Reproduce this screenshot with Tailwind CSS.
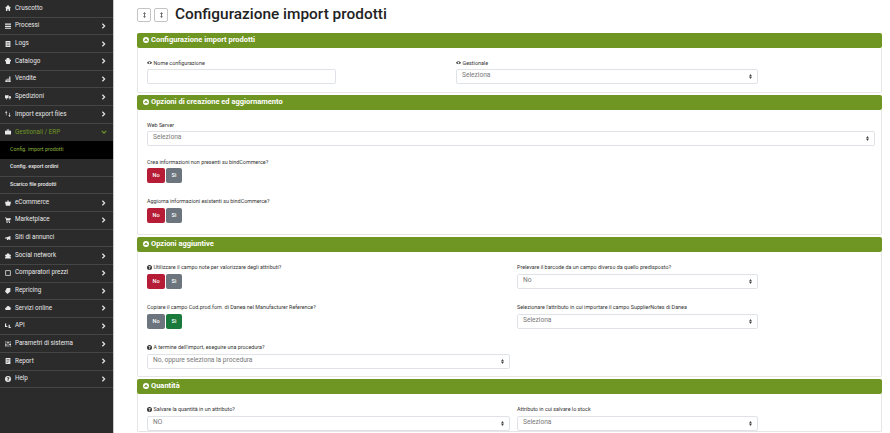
<!DOCTYPE html>
<html lang="it">
<head>
  <meta charset="UTF-8" />
  <title>Configurazione import prodotti</title>
  <script src="https://cdn.jsdelivr.net/npm/@tailwindcss/browser@4"></script>
</head>
<body class="h-[433px] overflow-hidden bg-white font-['Roboto',sans-serif] text-[#333]">
<svg class="hidden">
  <symbol id="chev" viewBox="0 0 6 8"><path d="M1.500 1 4.500 4 1.500 7" fill="none" stroke="currentColor" stroke-width="1.600"/></symbol>
  <symbol id="updown" viewBox="0 0 4 7"><path d="M2 0 4 3H0zM2 7 0 4h4z" fill="currentColor"/></symbol>
  <symbol id="eye" viewBox="0 0 10 6"><path d="M5 0c2.500 0 4 1.500 5 3-1 1.500-2.500 3-5 3S1 4.500 0 3c1-1.500 2.500-3 5-3zm0 1.200a1.800 1.800 0 1 0 0 3.600 1.800 1.800 0 0 0 0-3.600z" fill="currentColor" fill-rule="evenodd"/></symbol>
  <symbol id="help" viewBox="0 0 10 10"><path d="M5 0a5 5 0 1 1 0 10A5 5 0 0 1 5 0zM4.200 7v1.500h1.600V7zM3 3.800h1.500C4.600 3 5.800 3.100 5.700 3.800 5.600 4.500 4.200 4.700 4.200 6.300h1.600C5.800 5.300 7.300 5 7.300 3.700 7.300 1.500 3.200 1.300 3 3.800z" fill="currentColor" fill-rule="evenodd"/></symbol>
  <symbol id="collapse" viewBox="0 0 10 10"><path d="M5 0a5 5 0 1 1 0 10A5 5 0 0 1 5 0zM5 2.700 2 5.700 3.300 7 5 5.300 6.700 7 8 5.700z" fill="currentColor" fill-rule="evenodd"/></symbol>
</svg>
<div class="flex h-[433px] overflow-hidden">

  <!-- sidebar -->
  <nav class="w-[114px] shrink-0 border-r border-[#c8c8c8] bg-[#2b2b2b] text-[6.3px] text-[#e8e8e8]">
    <a class="flex h-[17.67px] items-center border-b border-[#454545] pl-[5px] pr-[7px]"><svg class="mr-[4px] h-[6px] w-[6px] shrink-0 fill-current" viewBox="0 0 10 10"><path d="M5 0 0 5h1.500v5h2.500V7h2v3h2.500V5H10z"/></svg>Cruscotto</a>
    <a class="flex h-[17.67px] items-center border-b border-[#454545] pl-[5px] pr-[7px]"><svg class="mr-[4px] h-[6px] w-[6px] shrink-0 fill-current" viewBox="0 0 10 10"><path d="M0 1h10v2H0zM0 4.500h10v2H0zM0 8h10v1.500H0z"/></svg>Processi<svg class="ml-auto h-[6px] w-[5px]"><use href="#chev"/></svg></a>
    <a class="flex h-[17.67px] items-center border-b border-[#454545] pl-[5px] pr-[7px]"><svg class="mr-[4px] h-[6px] w-[6px] shrink-0 fill-current" viewBox="0 0 10 10"><path d="M1 0h8v10H1zM2.500 2v1h5V2zm0 2.500v1h5v-1zm0 2.500v1h5V7z" fill-rule="evenodd"/></svg>Logs<svg class="ml-auto h-[6px] w-[5px]"><use href="#chev"/></svg></a>
    <a class="flex h-[17.67px] items-center border-b border-[#454545] pl-[5px] pr-[7px]"><svg class="mr-[4px] h-[6px] w-[6px] shrink-0 fill-current" viewBox="0 0 10 10"><path d="M3 0h4l1 3h2v2H9L8 10H2L1 5H0V3h2z"/></svg>Catalogo<svg class="ml-auto h-[6px] w-[5px]"><use href="#chev"/></svg></a>
    <a class="flex h-[17.67px] items-center border-b border-[#454545] pl-[5px] pr-[7px]"><svg class="mr-[4px] h-[6px] w-[6px] shrink-0 fill-current" viewBox="0 0 10 10"><path d="M0 9h10v1H0zM1 6h2v3H1zM4 4h2v5H4zM7 1h2v8H7z"/></svg>Vendite<svg class="ml-auto h-[6px] w-[5px]"><use href="#chev"/></svg></a>
    <a class="flex h-[17.67px] items-center border-b border-[#454545] pl-[5px] pr-[7px]"><svg class="mr-[4px] h-[6px] w-[6px] shrink-0 fill-current" viewBox="0 0 10 10"><path d="M0 2h6v5H0zM7 3.500h2L10 5v2H7z"/><circle cx="2.500" cy="8" r="1"/><circle cx="8" cy="8" r="1"/></svg>Spedizioni<svg class="ml-auto h-[6px] w-[5px]"><use href="#chev"/></svg></a>
    <a class="flex h-[17.67px] items-center border-b border-[#454545] pl-[5px] pr-[7px]"><svg class="mr-[4px] h-[6px] w-[6px] shrink-0 fill-current" viewBox="0 0 10 10"><path d="M2 0 0 3h1.500v4h1V3H4zM7 3h1v4h1.500L7.500 10 5.500 7H7z"/></svg>Import export files<svg class="ml-auto h-[6px] w-[5px]"><use href="#chev"/></svg></a>
    <a class="flex h-[17.67px] items-center pl-[5px] pr-[6px] text-[#6f9623]"><svg class="mr-[4px] h-[6px] w-[6px] shrink-0 fill-[#e8e8e8]" viewBox="0 0 10 10"><path d="M3 1h4v2h3v6H0V3h3zM4 2v1h2V2z" fill-rule="evenodd"/></svg>Gestionali / ERP<svg class="ml-auto h-[6px] w-[6px] rotate-90"><use href="#chev"/></svg></a>
    <div class="bg-black">
      <a class="flex h-[17.67px] items-center pl-[10px] text-[5.3px] text-[#8fb53f]">Config. import prodotti</a>
    </div>
    <a class="flex h-[17.67px] items-center border-b border-[#454545] pl-[10px] text-[5.3px] font-medium">Config. export ordini</a>
    <a class="flex h-[17.67px] items-center border-b border-[#454545] pl-[10px] text-[5.3px] font-medium">Scarico file prodotti</a>
    <a class="flex h-[17.67px] items-center border-b border-[#454545] pl-[5px] pr-[7px]"><svg class="mr-[4px] h-[6px] w-[6px] shrink-0 fill-current" viewBox="0 0 10 10"><path d="M0 3h10L8.500 9.500h-7zM3 3l2-3 2 3H6L5 1.500 4 3z"/></svg>eCommerce<svg class="ml-auto h-[6px] w-[5px]"><use href="#chev"/></svg></a>
    <a class="flex h-[17.67px] items-center border-b border-[#454545] pl-[5px] pr-[7px]"><svg class="mr-[4px] h-[6px] w-[6px] shrink-0 fill-current" viewBox="0 0 10 10"><path d="M0 1h2l.5 1H10L8.500 6H3l.3 1H8.500v1H2.500L1.300 2H0z"/><circle cx="3.500" cy="9" r="1"/><circle cx="7.500" cy="9" r="1"/></svg>Marketplace<svg class="ml-auto h-[6px] w-[5px]"><use href="#chev"/></svg></a>
    <a class="flex h-[17.67px] items-center border-b border-[#454545] pl-[5px] pr-[7px]"><svg class="mr-[4px] h-[6px] w-[6px] shrink-0 fill-current" viewBox="0 0 10 10"><path d="M0 4h2L9 1.500v7L2 6H0zM3 6.500h2l.5 2H3.500z"/></svg>Siti di annunci</a>
    <a class="flex h-[17.67px] items-center border-b border-[#454545] pl-[5px] pr-[7px]"><svg class="mr-[4px] h-[6px] w-[6px] shrink-0 fill-current" viewBox="0 0 10 10"><circle cx="5" cy="3" r="2.500"/><circle cx="1.800" cy="4" r="1.700"/><circle cx="8.200" cy="4" r="1.700"/><path d="M0 9c0-3 2-4 5-4s5 1 5 4z"/></svg>Social network<svg class="ml-auto h-[6px] w-[5px]"><use href="#chev"/></svg></a>
    <a class="flex h-[17.67px] items-center border-b border-[#454545] pl-[5px] pr-[7px]"><svg class="mr-[4px] h-[6px] w-[6px] shrink-0 fill-none stroke-current" viewBox="0 0 10 10"><path d="M1 1h8v8H1z" stroke-width="1.300"/></svg>Comparatori prezzi<svg class="ml-auto h-[6px] w-[5px]"><use href="#chev"/></svg></a>
    <a class="flex h-[17.67px] items-center border-b border-[#454545] pl-[5px] pr-[7px]"><svg class="mr-[4px] h-[6px] w-[6px] shrink-0 fill-current" viewBox="0 0 10 10"><path d="M3 0h6v6L4 10 0 6z"/></svg>Repricing<svg class="ml-auto h-[6px] w-[5px]"><use href="#chev"/></svg></a>
    <a class="flex h-[17.67px] items-center border-b border-[#454545] pl-[5px] pr-[7px]"><svg class="mr-[4px] h-[6px] w-[6px] shrink-0 fill-current" viewBox="0 0 10 10"><path d="M2.500 8.500a2.200 2.200 0 0 1-.3-4.400 3 3 0 0 1 5.700-.6 2.600 2.600 0 0 1-.2 5z"/></svg>Servizi online<svg class="ml-auto h-[6px] w-[5px]"><use href="#chev"/></svg></a>
    <a class="flex h-[17.67px] items-center border-b border-[#454545] pl-[5px] pr-[7px]"><svg class="mr-[4px] h-[6px] w-[6px] shrink-0 fill-current" viewBox="0 0 10 10"><path d="M0 1h2v4h2v1.500H0zM6 3h2v4h2v1.500H6z"/></svg>API<svg class="ml-auto h-[6px] w-[5px]"><use href="#chev"/></svg></a>
    <a class="flex h-[17.67px] items-center border-b border-[#454545] pl-[5px] pr-[7px]"><svg class="mr-[4px] h-[6px] w-[6px] shrink-0 fill-current" viewBox="0 0 10 10"><path d="M1 0h1v10H1zM4.500 0h1v10h-1zM8 0h1v10H8zM0 6h3v1.500H0zM3.500 2h3v1.500h-3zM7 5h3v1.500H7z"/></svg>Parametri di sistema<svg class="ml-auto h-[6px] w-[5px]"><use href="#chev"/></svg></a>
    <a class="flex h-[17.67px] items-center border-b border-[#454545] pl-[5px] pr-[7px]"><svg class="mr-[4px] h-[6px] w-[6px] shrink-0 fill-current" viewBox="0 0 10 10"><path d="M1 0h8v10H1zM2.500 2v1h5V2zm0 2.500v1h5v-1zm0 2.500v1h3V7z" fill-rule="evenodd"/></svg>Report<svg class="ml-auto h-[6px] w-[5px]"><use href="#chev"/></svg></a>
    <a class="flex h-[17.67px] items-center border-b border-[#454545] pl-[5px] pr-[7px]"><svg class="mr-[4px] h-[6px] w-[6px] shrink-0 text-current"><use href="#help"/></svg>Help<svg class="ml-auto h-[6px] w-[5px]"><use href="#chev"/></svg></a>
  </nav>

  <!-- main -->
  <main class="min-w-0 flex-1 pl-[23px] pr-[8px]">
    <header class="flex h-[32.5px] items-center pb-[3px]">
      <button class="flex h-[14px] w-[14px] items-center justify-center rounded-[2px] border border-[#c4c4c4] text-[#666]"><svg class="h-[6px] w-[3px]" viewBox="0 0 4 8"><path d="M2 0 4 2.500H2.600v3H4L2 8 0 5.500h1.400v-3H0z" fill="currentColor"/></svg></button>
      <button class="ml-[3px] flex h-[14px] w-[14px] items-center justify-center rounded-[2px] border border-[#c4c4c4] text-[#666]"><svg class="h-[6px] w-[3px]" viewBox="0 0 4 8"><path d="M2 0 4 2.500H2.600v3H4L2 8 0 5.500h1.400v-3H0z" fill="currentColor"/></svg></button>
      <h1 class="ml-[7px] text-[15.4px] leading-none font-medium text-[#222]">Configurazione import prodotti</h1>
    </header>

    <section class="mb-[2px]">
      <h2 class="flex h-[15px] items-center rounded-[2px] bg-[#6f9623] pl-[6px] text-[7.5px] font-bold text-white"><svg class="mr-[2px] h-[6px] w-[6px]"><use href="#collapse"/></svg>Configurazione import prodotti</h2>
      <div class="grid h-[45px] grid-cols-[189px_302px] gap-x-[120px] rounded-b-[2px] border border-t-0 border-[#e6e6e6] pr-[6px] pl-[9px] pt-[12px]">
        <div>
          <label class="mb-[2px] flex h-[7px] items-center gap-[1.500px] text-[5.4px] leading-[7px]"><svg class="h-[3.500px] w-[5px]"><use href="#eye"/></svg>Nome configurazione</label>
          <input class="block h-[15px] w-full rounded-[2px] border border-[#dfe3e8] bg-white" />
        </div>
        <div>
          <label class="mb-[2px] flex h-[7px] items-center gap-[1.500px] text-[5.4px] leading-[7px]"><svg class="h-[3.500px] w-[5px]"><use href="#eye"/></svg>Gestionale</label>
          <div class="flex h-[15px] items-center justify-between rounded-[2px] border border-[#dfe3e8] px-[5px] text-[6.6px] text-[#777]">Seleziona<svg class="h-[5px] w-[3px] text-[#444]"><use href="#updown"/></svg></div>
        </div>
      </div>
    </section>

    <section class="mb-[2px]">
      <h2 class="flex h-[15px] items-center rounded-[2px] bg-[#6f9623] pl-[6px] text-[7.5px] font-bold text-white"><svg class="mr-[2px] h-[6px] w-[6px]"><use href="#collapse"/></svg>Opzioni di creazione ed aggiornamento</h2>
      <div class="h-[125px] rounded-b-[2px] border border-t-0 border-[#e6e6e6] pr-[6px] pl-[9px] pt-[12px]">
        <label class="mb-[2px] block h-[7px] text-[5.4px] leading-[7px]">Web Server</label>
        <div class="flex h-[15px] items-center justify-between rounded-[2px] border border-[#dfe3e8] px-[5px] text-[6.6px] text-[#777]">Seleziona<svg class="h-[5px] w-[3px] text-[#444]"><use href="#updown"/></svg></div>
        <label class="mt-[13px] mb-[2.500px] block h-[7px] text-[5.4px] leading-[7px]">Crea informazioni non presenti su bindCommerce?</label>
        <div class="flex h-[15px] gap-px text-[5.6px] font-medium text-white">
          <span class="flex w-[18px] items-center justify-center rounded-[2px] bg-[#b71c36]">No</span>
          <span class="flex w-[16px] items-center justify-center rounded-[2px] bg-[#6c757d]">Sì</span>
        </div>
        <label class="mt-[15px] mb-[2.500px] block h-[7px] text-[5.4px] leading-[7px]">Aggiorna informazioni esistenti su bindCommerce?</label>
        <div class="flex h-[15px] gap-px text-[5.6px] font-medium text-white">
          <span class="flex w-[18px] items-center justify-center rounded-[2px] bg-[#b71c36]">No</span>
          <span class="flex w-[16px] items-center justify-center rounded-[2px] bg-[#6c757d]">Sì</span>
        </div>
      </div>
    </section>

    <section class="mb-[2px]">
      <h2 class="flex h-[15px] items-center rounded-[2px] bg-[#6f9623] pl-[6px] text-[7.5px] font-bold text-white"><svg class="mr-[2px] h-[6px] w-[6px]"><use href="#collapse"/></svg>Opzioni aggiuntive</h2>
      <div class="grid h-[125px] grid-cols-[363px_241px] content-start gap-x-[7px] gap-y-[15px] rounded-b-[2px] border border-t-0 border-[#e6e6e6] pr-[6px] pl-[9px] pt-[12px]">
        <div>
          <label class="mb-[3px] flex h-[7px] items-center gap-[1.500px] text-[5.4px] leading-[7px]"><svg class="h-[5px] w-[5px]"><use href="#help"/></svg>Utilizzare il campo note per valorizzare degli attributi?</label>
          <div class="flex h-[15px] gap-px text-[5.6px] font-medium text-white">
            <span class="flex w-[18px] items-center justify-center rounded-[2px] bg-[#b71c36]">No</span>
            <span class="flex w-[16px] items-center justify-center rounded-[2px] bg-[#6c757d]">Sì</span>
          </div>
        </div>
        <div>
          <label class="mb-[3px] block h-[7px] text-[5.4px] leading-[7px]">Prelevare il barcode da un campo diverso da quello predisposto?</label>
          <div class="flex h-[15px] items-center justify-between rounded-[2px] border border-[#dfe3e8] px-[5px] text-[6.6px] text-[#777]">No<svg class="h-[5px] w-[3px] text-[#444]"><use href="#updown"/></svg></div>
        </div>
        <div>
          <label class="mb-[3px] block h-[7px] text-[5.4px] leading-[7px]">Copiare il campo Cod.prod.forn. di Danea nel Manufacturer Reference?</label>
          <div class="flex h-[15px] gap-px text-[5.6px] font-medium text-white">
            <span class="flex w-[18px] items-center justify-center rounded-[2px] bg-[#6c757d]">No</span>
            <span class="flex w-[16px] items-center justify-center rounded-[2px] bg-[#1a7a3c]">Sì</span>
          </div>
        </div>
        <div>
          <label class="mb-[3px] block h-[7px] text-[5.4px] leading-[7px]">Selezionare l'attributo in cui importare il campo SupplierNotes di Danea</label>
          <div class="flex h-[15px] items-center justify-between rounded-[2px] border border-[#dfe3e8] px-[5px] text-[6.6px] text-[#777]">Seleziona<svg class="h-[5px] w-[3px] text-[#444]"><use href="#updown"/></svg></div>
        </div>
        <div>
          <label class="mb-[3px] flex h-[7px] items-center gap-[1.500px] text-[5.4px] leading-[7px]"><svg class="h-[5px] w-[5px]"><use href="#help"/></svg>A termine dell'import, eseguire una procedura?</label>
          <div class="flex h-[15px] items-center justify-between rounded-[2px] border border-[#dfe3e8] px-[5px] text-[6.6px] text-[#777]">No, oppure seleziona la procedura<svg class="h-[5px] w-[3px] text-[#444]"><use href="#updown"/></svg></div>
        </div>
      </div>
    </section>

    <section>
      <h2 class="flex h-[15px] items-center rounded-[2px] bg-[#6f9623] pl-[6px] text-[7.5px] font-bold text-white"><svg class="mr-[2px] h-[6px] w-[6px]"><use href="#collapse"/></svg>Quantità</h2>
      <div class="grid grid-cols-[363px_241px] gap-x-[7px] rounded-b-[2px] border border-t-0 border-[#e6e6e6] pr-[6px] pl-[9px] pt-[12px]">
        <div>
          <label class="mb-[3px] flex h-[7px] items-center gap-[1.500px] text-[5.4px] leading-[7px]"><svg class="h-[5px] w-[5px]"><use href="#help"/></svg>Salvare la quantità in un attributo?</label>
          <div class="flex h-[15px] items-center justify-between rounded-[2px] border border-[#dfe3e8] px-[5px] text-[6.6px] text-[#777]">NO<svg class="h-[5px] w-[3px] text-[#444]"><use href="#updown"/></svg></div>
        </div>
        <div>
          <label class="mb-[3px] block h-[7px] text-[5.4px] leading-[7px]">Attributo in cui salvare lo stock</label>
          <div class="flex h-[15px] items-center justify-between rounded-[2px] border border-[#dfe3e8] px-[5px] text-[6.6px] text-[#777]">Seleziona<svg class="h-[5px] w-[3px] text-[#444]"><use href="#updown"/></svg></div>
        </div>
      </div>
    </section>
  </main>
</div>
</body>
</html>
